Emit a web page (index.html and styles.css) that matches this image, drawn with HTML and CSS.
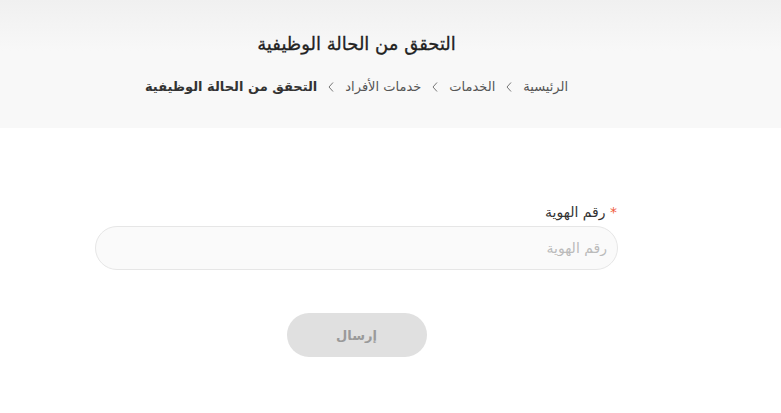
FILE: index.html
```
<!DOCTYPE html>
<html lang="ar" dir="rtl">
<head>
    <meta charset="UTF-8">
    <title>التحقق من الحالة الوظيفية</title>
    <link rel="stylesheet" href="styles.css">
</head>
<body>
<header class="page-head">
    <div class="column">
        <h1>التحقق من الحالة الوظيفية</h1>
        <nav class="crumbs">
            <a href="#">الرئيسية</a>
            <svg class="sep" width="8" height="12" viewBox="0 0 8 12"><path d="M6 1.5 L2 6 L6 10.5" fill="none" stroke="#777" stroke-width="1"/></svg>
            <a href="#">الخدمات</a>
            <svg class="sep" width="8" height="12" viewBox="0 0 8 12"><path d="M6 1.5 L2 6 L6 10.5" fill="none" stroke="#777" stroke-width="1"/></svg>
            <a href="#">خدمات الأفراد</a>
            <svg class="sep" width="8" height="12" viewBox="0 0 8 12"><path d="M6 1.5 L2 6 L6 10.5" fill="none" stroke="#777" stroke-width="1"/></svg>
            <span class="current">التحقق من الحالة الوظيفية</span>
        </nav>
    </div>
</header>
<main class="column">
    <form class="check-form">
        <label for="nid"><span class="req">*</span> رقم الهوية</label>
        <input id="nid" type="text" placeholder="رقم الهوية">
        <div class="actions">
            <button type="button" disabled>إرسال</button>
        </div>
    </form>
</main>
</body>
</html>
```

FILE: styles.css
```
body {
    font-family: "DejaVu Sans", "Noto Sans", sans-serif;
    margin: 0;
    background: #fff;
    color: #333;
}
.column {
    width: 523px;
    margin-right: 163px;
}
.page-head {
    background: linear-gradient(#f0f0f0, #f8f8f8 40%, #f8f8f8);
    height: 128px;
    overflow: hidden;
}
.page-head h1 {
    margin: 0;
    padding-top: 33px;
    text-align: center;
    font-size: 18px;
    font-weight: normal;
    color: #222;
    line-height: 22px;
    -webkit-text-stroke: 0.3px #222;
}
.crumbs {
    margin-top: 22px;
    display: flex;
    justify-content: center;
    align-items: center;
    gap: 10px;
    font-size: 13px;
    line-height: 20px;
}
.crumbs a {
    text-decoration: none;
    color: #555;
}
.crumbs .current {
    font-weight: bold;
    color: #333;
}
.check-form {
    padding-top: 74px;
}
.check-form label {
    display: block;
    font-size: 14px;
    line-height: 20px;
    color: #333;
    margin-bottom: 4px;
    padding-right: 1px;
}
.req {
    color: #f05a3c;
}
.check-form input {
    box-sizing: border-box;
    width: 100%;
    height: 44px;
    border: 1px solid #e6e6e6;
    border-radius: 22px;
    background: #fafafa;
    padding: 0 10px;
    font-family: inherit;
    font-size: 14px;
    color: #333;
    outline: none;
}
.check-form input::placeholder {
    color: #bbb;
}
.actions {
    display: flex;
    justify-content: center;
    margin-top: 43px;
}
.actions button {
    width: 140px;
    height: 44px;
    border: none;
    border-radius: 22px;
    background: #e0e0e0;
    color: #9a9a9a;
    font-family: inherit;
    font-size: 13px;
    font-weight: bold;
}
```
